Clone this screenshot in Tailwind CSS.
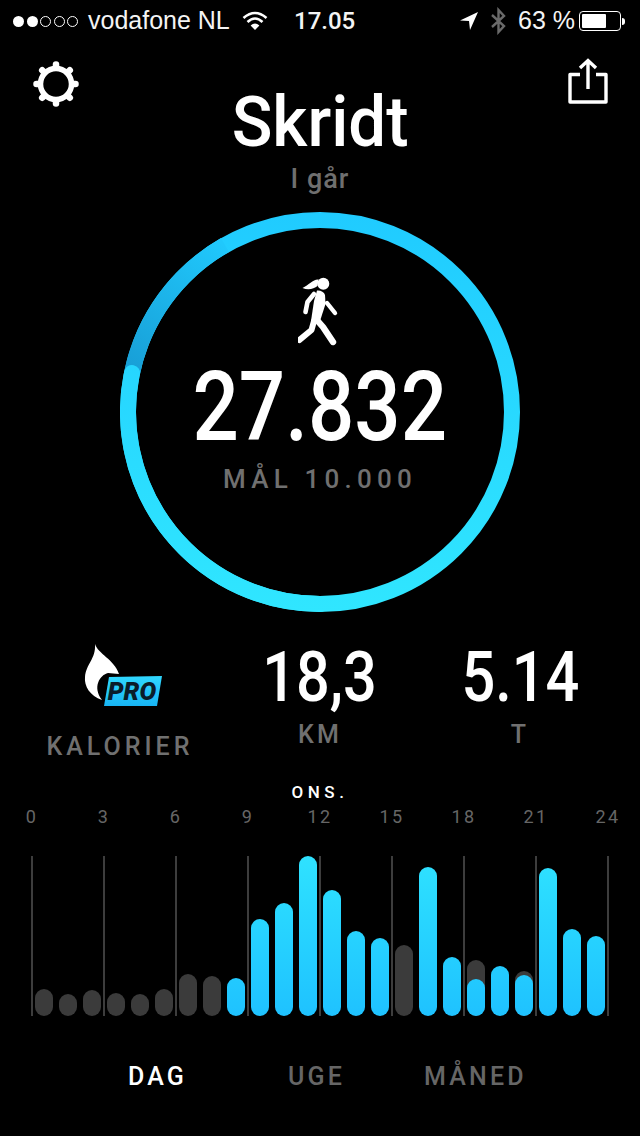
<!DOCTYPE html>
<html lang="da">
<head>
  <meta charset="UTF-8" />
  <meta name="viewport" content="width=device-width, initial-scale=1.0"/>
  <title>Skridt</title>
  <script src="https://cdn.jsdelivr.net/npm/@tailwindcss/browser@4"></script>
</head>

<body class="bg-black text-white w-[640px] h-[1136px] overflow-hidden font-['Roboto',sans-serif]">

  <!-- status bar -->
  <div class="h-[42px] flex items-center text-[25px] font-['Liberation_Sans',sans-serif] text-[#f4f4f4]">
    <div class="ml-[13px] w-[66px] flex gap-[2.5px]">
      <span class="w-[11px] h-[11px] rounded-full bg-white"></span>
      <span class="w-[11px] h-[11px] rounded-full bg-white"></span>
      <span class="w-[11px] h-[11px] rounded-full border border-white"></span>
      <span class="w-[11px] h-[11px] rounded-full border border-white"></span>
      <span class="w-[11px] h-[11px] rounded-full border border-white"></span>
    </div>
    <span class="ml-[9px] w-[144px] whitespace-nowrap">vodafone NL</span>
    <svg class="ml-[10px]" width="26" height="20" viewBox="0 0 26 20" fill="none" stroke="#fff" stroke-width="2.6">
      <path d="M1.5 7 Q13 -3 24.5 7"/>
      <path d="M5.5 11 Q13 4 20.5 11"/>
      <path d="M13 19 L8.6 14.4 Q13 10.6 17.4 14.4 Z" fill="#fff" stroke="none"/>
    </svg>
    <span class="ml-[26px] w-[60px] text-[24px] font-medium font-['Roboto',sans-serif]">17.05</span>
    <svg class="ml-[105px]" width="20" height="20" viewBox="0 0 20 20" fill="#fff"><path d="M19 1 L1 9.5 L10 10 L11 19 Z"/></svg>
    <svg class="ml-[11px]" width="17" height="28" viewBox="0 0 17 28" fill="none" stroke="#6a6a6a" stroke-width="2.4"><path d="M2 8 L14 19 L8.5 25 V3 L14 9 L2 20"/></svg>
    <span class="ml-[11px] w-[56px] whitespace-nowrap">63 %</span>
    <div class="ml-[5px] w-[42px] h-[20px] border border-white rounded-[4px] p-[2px]">
      <div class="w-[24px] h-full bg-white rounded-[1px]"></div>
    </div>
    <div class="ml-[1px] w-[3px] h-[7px] bg-white rounded-r-sm"></div>
  </div>

  <!-- header -->
  <div class="relative h-[170px] flex flex-col items-center">
    <svg class="absolute left-[33px] top-[19px]" width="46" height="46" viewBox="0 0 46 46" fill="none" stroke="#fff">
      <circle cx="23" cy="23" r="15.5" stroke-width="5.5"/>
      <g stroke-width="6.5" stroke-linecap="round">
        <path d="M23 3.5 V6"/><path d="M23 40 V42.5"/><path d="M3.5 23 H6"/><path d="M40 23 H42.5"/>
        <path d="M9.2 9.2 L11 11"/><path d="M35 35 L36.8 36.8"/><path d="M36.8 9.2 L35 11"/><path d="M11 35 L9.2 36.8"/>
      </g>
    </svg>
    <svg class="absolute left-[566px] top-[16px]" width="44" height="46" viewBox="0 0 44 46" fill="none" stroke="#fff" stroke-width="3.4">
      <path d="M14 16.5 H4 V44 H40 V16.5 H30" stroke-linejoin="round"/>
      <path d="M22 31 V3 M14 10 L22 2.5 L30 10"/>
    </svg>
    <h1 class="text-[70px] leading-[80px] mt-[40px] font-medium scale-x-[.96]">Skridt</h1>
    <p class="text-[27px] leading-[32px] mt-[1px] tracking-[1px] font-medium text-[#6f6f6f]">I går</p>
  </div>

  <!-- ring -->
  <div class="relative w-[400px] h-[400px] mx-auto flex flex-col items-center pt-[64px]">
    <svg class="absolute inset-0" width="400" height="400" viewBox="0 0 400 400" fill="none" stroke-width="16">
      <defs>
        <linearGradient id="ringBase" gradientUnits="userSpaceOnUse" x1="0" y1="0" x2="0" y2="400">
          <stop offset="0" stop-color="#20cbff"/>
          <stop offset="1" stop-color="#30e6ff"/>
        </linearGradient>
        <linearGradient id="ringDark" gradientUnits="userSpaceOnUse" x1="12" y1="161" x2="105" y2="34">
          <stop offset="0" stop-color="#189ed6"/>
          <stop offset="1" stop-color="#20c8fc"/>
        </linearGradient>
      </defs>
      <circle cx="200" cy="200" r="192" stroke="url(#ringBase)"/>
      <path d="M12 161 A192 192 0 0 1 105 33" stroke="url(#ringDark)"/>
      <path d="M200 392 A192 192 0 0 1 12 161" stroke="url(#ringBase)" stroke-linecap="round"/>
    </svg>
    <svg class="relative" width="44" height="70" viewBox="298 275 44 70" fill="none" stroke="#fff" stroke-linecap="round" stroke-linejoin="round">
      <circle cx="323.3" cy="282.7" r="6" fill="#fff" stroke="none"/>
      <path d="M318.5 278.5 C313 278 309 284 302.5 287 C308 289.5 314 288 317.5 285 Z" fill="#fff" stroke="none"/>
      <path d="M317 289.5 C320 289 324 290.5 325 294 L325.5 303 L320 320 L311 320 L314 300 Z" fill="#fff" stroke="none"/>
      <path d="M314 293 L307.5 301 L305.5 311" stroke-width="4.6"/>
      <path d="M327 302 L335 312" stroke-width="4.4"/>
      <path d="M314 320 L311.5 329 L299.5 339" stroke-width="6"/>
      <path d="M316 318 L323 326 L333 341" stroke-width="6.4"/>
    </svg>
    <div class="relative text-[96px] leading-[96px] mt-[13px] font-medium scale-x-[.85]">27.832</div>
    <div class="relative text-[26px] leading-[30px] mt-[9px] tracking-[5.2px] font-medium text-[#707070]">MÅL 10.000</div>
  </div>

  <!-- stats -->
  <div class="grid grid-cols-3 px-[20px] mt-[27px] h-[143px] text-center">
    <div class="flex flex-col items-center">
      <svg class="ml-[3px]" width="84" height="70" viewBox="80 640 84 70">
        <defs>
          <linearGradient id="proFill" x1="0" y1="0" x2="0" y2="1">
            <stop offset="0" stop-color="#30d8ff"/>
            <stop offset="1" stop-color="#18b4f4"/>
          </linearGradient>
        </defs>
        <path d="M95 645 C98 655 114 660 119 675 L108 674 C100 676 92 688 102 701 C90 697 84 687 85 678 C86 665 96 660 95 645 Z" fill="#fff"/>
        <path d="M109 678 L162 677 L157 707 L104 707 Z" fill="url(#proFill)"/>
        <text x="132" y="701" text-anchor="middle" font-family="Roboto, sans-serif" font-size="25" font-weight="900" font-style="italic" fill="#0a1c2a">PRO</text>
      </svg>
      <span class="text-[25px] leading-[30px] mt-[23px] tracking-[4px] font-medium text-[#707070]">KALORIER</span>
    </div>
    <div class="flex flex-col items-center">
      <span class="text-[70px] leading-[76px] font-medium scale-x-[.85]">18,3</span>
      <span class="text-[25px] leading-[30px] mt-[5px] tracking-[3.2px] font-medium text-[#707070]">KM</span>
    </div>
    <div class="flex flex-col items-center">
      <span class="text-[70px] leading-[76px] font-medium scale-x-[.85]">5.14</span>
      <span class="text-[25px] leading-[30px] mt-[5px] tracking-[3.2px] font-medium text-[#707070]">T</span>
    </div>
  </div>

  <!-- chart -->
  <div class="relative">
    <p class="text-center text-[17px] leading-[20px] tracking-[4.5px] font-medium">ONS.</p>
    <div class="flex ml-[-4px] mt-[5px] text-[18px] leading-[20px] tracking-[2.5px] text-[#666]">
      <span class="w-[72px] shrink-0 text-center">0</span>
      <span class="w-[72px] shrink-0 text-center">3</span>
      <span class="w-[72px] shrink-0 text-center">6</span>
      <span class="w-[72px] shrink-0 text-center">9</span>
      <span class="w-[72px] shrink-0 text-center">12</span>
      <span class="w-[72px] shrink-0 text-center">15</span>
      <span class="w-[72px] shrink-0 text-center">18</span>
      <span class="w-[72px] shrink-0 text-center">21</span>
      <span class="w-[72px] shrink-0 text-center">24</span>
    </div>
    <div class="relative ml-[31px] w-[578px] h-[160px] mt-[29px]">
      <div class="absolute inset-0 flex justify-between">
        <span class="w-[2px] bg-[#3d3d3d]"></span>
        <span class="w-[2px] bg-[#3d3d3d]"></span>
        <span class="w-[2px] bg-[#3d3d3d]"></span>
        <span class="w-[2px] bg-[#3d3d3d]"></span>
        <span class="w-[2px] bg-[#3d3d3d]"></span>
        <span class="w-[2px] bg-[#3d3d3d]"></span>
        <span class="w-[2px] bg-[#3d3d3d]"></span>
        <span class="w-[2px] bg-[#3d3d3d]"></span>
        <span class="w-[2px] bg-[#3d3d3d]"></span>
      </div>
      <div class="relative h-full ml-[4px] flex items-end gap-[6px]">
        <div class="w-[18px] h-[27px] rounded-full bg-[#3b3b3b]"></div>
        <div class="w-[18px] h-[22px] rounded-full bg-[#3b3b3b]"></div>
        <div class="w-[18px] h-[26px] rounded-full bg-[#3b3b3b]"></div>
        <div class="w-[18px] h-[23px] rounded-full bg-[#3b3b3b]"></div>
        <div class="w-[18px] h-[22px] rounded-full bg-[#3b3b3b]"></div>
        <div class="w-[18px] h-[27px] rounded-full bg-[#3b3b3b]"></div>
        <div class="w-[18px] h-[42px] rounded-full bg-[#3b3b3b]"></div>
        <div class="w-[18px] h-[40px] rounded-full bg-[#3b3b3b]"></div>
        <div class="w-[18px] h-[38px] rounded-full bg-gradient-to-b from-[#2fe2ff] to-[#1fc2ff] bg-bottom bg-no-repeat bg-size-[100%_160px]"></div>
        <div class="w-[18px] h-[97px] rounded-full bg-gradient-to-b from-[#2fe2ff] to-[#1fc2ff] bg-bottom bg-no-repeat bg-size-[100%_160px]"></div>
        <div class="w-[18px] h-[113px] rounded-full bg-gradient-to-b from-[#2fe2ff] to-[#1fc2ff] bg-bottom bg-no-repeat bg-size-[100%_160px]"></div>
        <div class="w-[18px] h-[160px] rounded-full bg-gradient-to-b from-[#2fe2ff] to-[#1fc2ff] bg-bottom bg-no-repeat bg-size-[100%_160px]"></div>
        <div class="w-[18px] h-[126px] rounded-full bg-gradient-to-b from-[#2fe2ff] to-[#1fc2ff] bg-bottom bg-no-repeat bg-size-[100%_160px]"></div>
        <div class="w-[18px] h-[85px] rounded-full bg-gradient-to-b from-[#2fe2ff] to-[#1fc2ff] bg-bottom bg-no-repeat bg-size-[100%_160px]"></div>
        <div class="w-[18px] h-[78px] rounded-full bg-gradient-to-b from-[#2fe2ff] to-[#1fc2ff] bg-bottom bg-no-repeat bg-size-[100%_160px]"></div>
        <div class="w-[18px] h-[71px] rounded-full bg-[#3b3b3b]"></div>
        <div class="w-[18px] h-[149px] rounded-full bg-gradient-to-b from-[#2fe2ff] to-[#1fc2ff] bg-bottom bg-no-repeat bg-size-[100%_160px]"></div>
        <div class="w-[18px] h-[59px] rounded-full bg-gradient-to-b from-[#2fe2ff] to-[#1fc2ff] bg-bottom bg-no-repeat bg-size-[100%_160px]"></div>
        <div class="w-[18px] h-[56px] rounded-full bg-[#3b3b3b] flex items-end">
          <div class="w-full h-[37px] rounded-full bg-gradient-to-b from-[#2fe2ff] to-[#1fc2ff] bg-bottom bg-no-repeat bg-size-[100%_160px]"></div>
        </div>
        <div class="w-[18px] h-[50px] rounded-full bg-gradient-to-b from-[#2fe2ff] to-[#1fc2ff] bg-bottom bg-no-repeat bg-size-[100%_160px]"></div>
        <div class="w-[18px] h-[45px] rounded-full bg-[#3b3b3b] flex items-end">
          <div class="w-full h-[41px] rounded-full bg-gradient-to-b from-[#2fe2ff] to-[#1fc2ff] bg-bottom bg-no-repeat bg-size-[100%_160px]"></div>
        </div>
        <div class="w-[18px] h-[148px] rounded-full bg-gradient-to-b from-[#2fe2ff] to-[#1fc2ff] bg-bottom bg-no-repeat bg-size-[100%_160px]"></div>
        <div class="w-[18px] h-[87px] rounded-full bg-gradient-to-b from-[#2fe2ff] to-[#1fc2ff] bg-bottom bg-no-repeat bg-size-[100%_160px]"></div>
        <div class="w-[18px] h-[80px] rounded-full bg-gradient-to-b from-[#2fe2ff] to-[#1fc2ff] bg-bottom bg-no-repeat bg-size-[100%_160px]"></div>
      </div>
    </div>
  </div>

  <!-- range tabs -->
  <div class="flex mt-[46px] text-[25px] leading-[30px] tracking-[3.2px] font-medium text-[#666]">
    <span class="ml-[128px] w-[160px] text-white">DAG</span>
    <span class="w-[136px]">UGE</span>
    <span>MÅNED</span>
  </div>

</body>
</html>
